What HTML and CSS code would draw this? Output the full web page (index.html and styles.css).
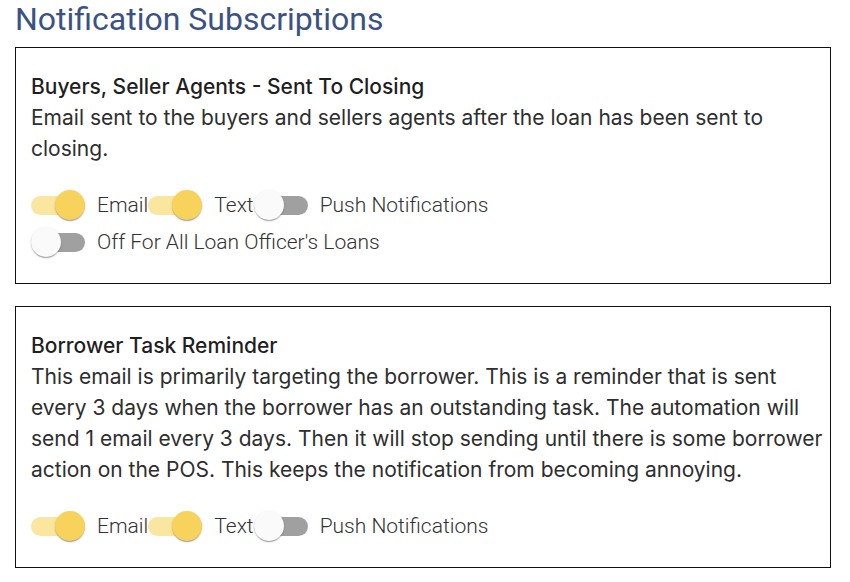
FILE: index.html
```html
<!DOCTYPE html>
<html lang="en">
<head>
<meta charset="utf-8">
<title>Notification Subscriptions</title>
<link rel="stylesheet" href="styles.css">
</head>
<body>
  <h1 class="page-title">Notification Subscriptions</h1>

  <section class="card">
    <h2 class="card-title">Buyers, Seller Agents - Sent To Closing</h2>
    <p class="card-desc">Email sent to the buyers and sellers agents after the loan has been sent to closing.</p>
    <div class="toggles">
      <div class="toggle-row">
        <span class="switch on"><span class="track"></span><span class="thumb"></span></span>
        <span class="toggle-label">Email</span>
        <span class="switch on"><span class="track"></span><span class="thumb"></span></span>
        <span class="toggle-label">Text</span>
        <span class="switch"><span class="track"></span><span class="thumb"></span></span>
        <span class="toggle-label">Push Notifications</span>
      </div>
      <div class="toggle-row">
        <span class="switch"><span class="track"></span><span class="thumb"></span></span>
        <span class="toggle-label">Off For All Loan Officer's Loans</span>
      </div>
    </div>
  </section>

  <section class="card">
    <h2 class="card-title">Borrower Task Reminder</h2>
    <p class="card-desc">This email is primarily targeting the borrower. This is a reminder that is sent every 3 days when the borrower has an outstanding task. The automation will send 1 email every 3 days. Then it will stop sending until there is some borrower action on the POS. This keeps the notification from becoming annoying.</p>
    <div class="toggles">
      <div class="toggle-row">
        <span class="switch on"><span class="track"></span><span class="thumb"></span></span>
        <span class="toggle-label">Email</span>
        <span class="switch on"><span class="track"></span><span class="thumb"></span></span>
        <span class="toggle-label">Text</span>
        <span class="switch"><span class="track"></span><span class="thumb"></span></span>
        <span class="toggle-label">Push Notifications</span>
      </div>
    </div>
  </section>
</body>
</html>
```

FILE: styles.css
```css
html, body {
  margin: 0;
  padding: 0;
  background: #ffffff;
}

body {
  padding: 0 19px 0 15px;
  font-family: Inter, "Noto Sans", sans-serif;
}

.page-title {
  margin: 0 0 9px 0;
  font-family: Roboto, "Liberation Sans", sans-serif;
  font-weight: 400;
  font-size: 32px;
  line-height: 38px;
  color: #3b5283;
}

.card {
  border: 1px solid #111;
  padding: 23px 4px 23px 15px;
  margin-bottom: 22px;
}

.card-title {
  margin: 0;
  font-size: 21px;
  font-weight: 500;
  line-height: 31px;
  color: #1f1f1f;
}

.card-desc {
  margin: 0;
  font-size: 21px;
  font-weight: 400;
  line-height: 31px;
  color: #2e2e2e;
}

.toggles {
  margin-top: 22px;
}

.toggle-row {
  display: flex;
  align-items: center;
  height: 37px;
}

/* switch: pill track with a round thumb sliding over it */
.switch {
  position: relative;
  flex: none;
  width: 54px;
  height: 30px;
}

.switch .track {
  position: absolute;
  left: 0;
  right: 0;
  top: 6px;
  height: 19px;
  border-radius: 10px;
  background: #a0a0a0;
}

.switch .thumb {
  position: absolute;
  left: 0;
  top: 0;
  width: 30px;
  height: 30px;
  border-radius: 50%;
  background: #fafafa;
  box-shadow: 0 2px 1px -1px rgba(0, 0, 0, 0.2), 0 1px 1px 0 rgba(0, 0, 0, 0.14), 0 1px 3px 0 rgba(0, 0, 0, 0.12);
}

.switch.on .track {
  background: #fbe6a0;
}

.switch.on .thumb {
  left: 24px;
  background: #f7d35c;
}

.toggle-label {
  margin-left: 12px;
  font-family: Roboto, "Liberation Sans", sans-serif;
  font-weight: 300;
  font-size: 21px;
  color: #333;
  white-space: nowrap;
}
```
